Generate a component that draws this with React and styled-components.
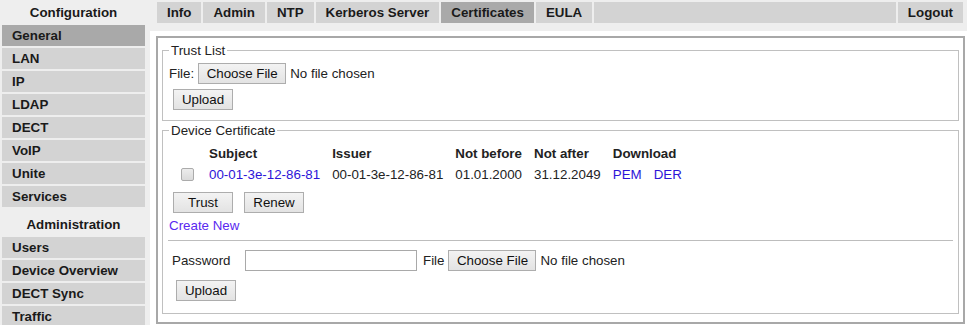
import styled, { createGlobalStyle } from 'styled-components';

const GlobalStyle = createGlobalStyle`
  body {
    margin: 0;
    background: #eeeeee;
    font-family: "Liberation Sans", Arial, sans-serif;
    font-size: 13.333px;
    line-height: 15px;
    color: #222;
  }
`;

const configItems = ['General', 'LAN', 'IP', 'LDAP', 'DECT', 'VoIP', 'Unite', 'Services'];
const adminItems = ['Users', 'Device Overview', 'DECT Sync', 'Traffic'];
const tabs = ['Info', 'Admin', 'NTP', 'Kerberos Server', 'Certificates', 'EULA'];

export default function App() {
  return (
    <>
      <GlobalStyle />
      <Page>
        <Sidebar>
          <SideHeader>Configuration</SideHeader>
          {configItems.map((item) => (
            <SideItem key={item} $active={item === 'General'}>{item}</SideItem>
          ))}
          <SideHeader $spaced>Administration</SideHeader>
          {adminItems.map((item) => (
            <SideItem key={item}>{item}</SideItem>
          ))}
        </Sidebar>

        <Main>
          <TabBar>
            {tabs.map((tab) => (
              <Tab key={tab} $active={tab === 'Certificates'}>{tab}</Tab>
            ))}
            <TabFiller />
            <Tab>Logout</Tab>
          </TabBar>

          <Content>
            <Panel>
              <Fieldset $bottom={10}>
                <Legend>Trust List</Legend>
                <FileRow>
                  <span>File:</span>
                  <Button $wide>Choose File</Button>
                  <span>No file chosen</span>
                </FileRow>
                <Button $indent={4} $top={5}>Upload</Button>
              </Fieldset>

              <Fieldset $bottom={12}>
                <Legend>Device Certificate</Legend>
                <CertTable>
                  <thead>
                    <tr>
                      <Th></Th>
                      <Th>Subject</Th>
                      <Th>Issuer</Th>
                      <Th>Not before</Th>
                      <Th>Not after</Th>
                      <Th>Download</Th>
                    </tr>
                  </thead>
                  <tbody>
                    <tr>
                      <Td><Check type="checkbox" /></Td>
                      <Td><Link href="#">00-01-3e-12-86-81</Link></Td>
                      <Td>00-01-3e-12-86-81</Td>
                      <Td>01.01.2000</Td>
                      <Td>31.12.2049</Td>
                      <Td>
                        <Link href="#">PEM</Link>
                        <Link href="#" $gap>DER</Link>
                      </Td>
                    </tr>
                  </tbody>
                </CertTable>
                <ButtonRow>
                  <Button>Trust</Button>
                  <Button>Renew</Button>
                </ButtonRow>
                <CreateLink href="#">Create New</CreateLink>
                <Rule />
                <PasswordRow>
                  <PasswordLabel>Password</PasswordLabel>
                  <TextInput type="password" />
                  <FileLabel>File</FileLabel>
                  <Button $wide>Choose File</Button>
                  <NoFile>No file chosen</NoFile>
                </PasswordRow>
                <Button $indent={7} $top={9}>Upload</Button>
              </Fieldset>
            </Panel>
          </Content>
        </Main>
      </Page>
    </>
  );
}

const Page = styled.div`
  display: flex;
  align-items: stretch;
  min-height: 100vh;
`;

const Sidebar = styled.div`
  width: 150px;
  box-sizing: border-box;
  padding: 0 5px 0 2px;
  display: flex;
  flex-direction: column;
  gap: 2px;
  flex-shrink: 0;
`;

const SideHeader = styled.div`
  height: ${(p) => (p.$spaced ? '26px' : '23px')};
  box-sizing: border-box;
  padding-top: ${(p) => (p.$spaced ? '8px' : '5px')};
  text-align: center;
  font-weight: bold;
  color: #1a1a1a;
`;

const SideItem = styled.div`
  height: 21px;
  line-height: 21px;
  padding-left: 10px;
  font-weight: bold;
  color: #1a1a1a;
  background: ${(p) => (p.$active ? '#a9a9a9' : '#d3d3d3')};
`;

const Main = styled.div`
  flex: 1;
  display: flex;
  flex-direction: column;
`;

const TabBar = styled.div`
  display: flex;
  gap: 2px;
  padding: 2px 4px 0 7px;
  margin-bottom: 8px;
`;

const Tab = styled.div`
  height: 21px;
  line-height: 21px;
  padding: 0 10px;
  font-weight: bold;
  color: #1a1a1a;
  background: ${(p) => (p.$active ? '#a9a9a9' : '#d3d3d3')};
`;

const TabFiller = styled.div`
  flex: 1;
  background: #d3d3d3;
`;

const Content = styled.div`
  flex: 1;
  background: #fff;
  padding: 5px 2px 0 6px;
`;

const Panel = styled.div`
  border: 2px solid #a8a8a8;
  padding: 5px 4px 8px;
  display: flex;
  flex-direction: column;
  gap: 2px;
`;

const Fieldset = styled.fieldset`
  margin: 0;
  border: 1px solid #c0c0c0;
  padding: 5px 6px ${(p) => p.$bottom}px;
  display: flex;
  flex-direction: column;
  align-items: flex-start;
`;

const Legend = styled.legend`
  padding: 0 2px;
  line-height: 15px;
`;

const FileRow = styled.div`
  display: flex;
  align-items: center;
  height: 21px;

  & > span:first-child {
    margin-right: 4px;
  }
  & > span:last-child {
    margin-left: 4px;
  }
`;

const Button = styled.button`
  box-sizing: border-box;
  width: ${(p) => (p.$wide ? '88px' : '60px')};
  height: 21px;
  margin: ${(p) => p.$top || 0}px 0 0 ${(p) => p.$indent || 0}px;
  padding: 0;
  border: 1px solid #adadad;
  border-radius: 0;
  background: linear-gradient(#f3f3f3, #e3e3e3);
  font-family: inherit;
  font-size: 13.333px;
  color: #111;
`;

const CertTable = styled.table`
  border-spacing: 2px;
  margin: 0;
`;

const Th = styled.th`
  padding: 1px 5px;
  text-align: left;
  font-weight: bold;
  white-space: nowrap;
`;

const Td = styled.td`
  padding: 1px 5px;
  height: 19px;
  white-space: nowrap;
  vertical-align: middle;
`;

const Check = styled.input`
  appearance: none;
  display: block;
  width: 13px;
  height: 13px;
  margin: 3px 3px 3px 5px;
  border: 1px solid #ababab;
  border-radius: 2px;
  background: linear-gradient(#ececec, #dadada);
`;

const Link = styled.a`
  color: #2d14d8;
  text-decoration: none;
  margin-left: ${(p) => (p.$gap ? '12px' : '0')};
`;

const ButtonRow = styled.div`
  display: flex;
  gap: 11px;
  padding-left: 4px;
  margin-top: 5px;
`;

const CreateLink = styled.a`
  margin-top: 5px;
  color: #5a28f0;
  text-decoration: none;
`;

const Rule = styled.hr`
  align-self: stretch;
  border: none;
  border-top: 1px solid #bdbdbd;
  margin: 7px -1px 0;
`;

const PasswordRow = styled.div`
  display: flex;
  align-items: center;
  height: 21px;
  margin-top: 9px;
`;

const PasswordLabel = styled.span`
  width: 73px;
  padding-left: 3px;
`;

const TextInput = styled.input`
  box-sizing: border-box;
  width: 172px;
  height: 21px;
  margin: 0;
  border: 1px solid #a9a9a9;
  padding: 1px 2px;
  font-family: inherit;
  font-size: 13.333px;
`;

const FileLabel = styled.span`
  margin: 0 4px 0 6px;
`;

const NoFile = styled.span`
  margin-left: 4px;
`;
